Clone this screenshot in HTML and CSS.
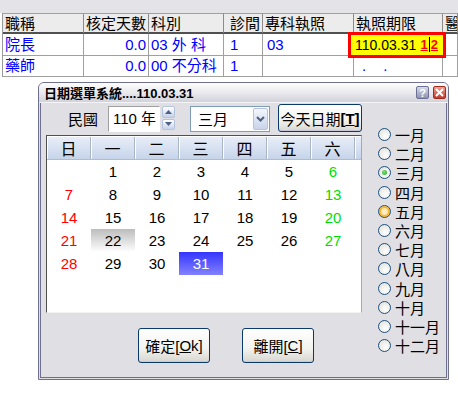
FILE: index.html
```html
<!DOCTYPE html>
<html lang="zh-Hant">
<head>
    <meta charset="UTF-8">
    <title>日期選單系統</title>
    <link rel="stylesheet" href="styles.css">
</head>
<body>
    <div class="sheet">
        <div class="sheet-top"></div>
        <div class="grid">
            <div class="cell head">職稱</div>
            <div class="cell head">核定天數</div>
            <div class="cell head">科別</div>
            <div class="cell head c4">診間</div>
            <div class="cell head">專科執照</div>
            <div class="cell head">執照期限</div>
            <div class="cell head">醫</div>

            <div class="cell">院長</div>
            <div class="cell num">0.0</div>
            <div class="cell">03 外 科</div>
            <div class="cell c4">1</div>
            <div class="cell c5">03</div>
            <div class="cell"></div>
            <div class="cell"></div>

            <div class="cell row2">藥師</div>
            <div class="cell num row2">0.0</div>
            <div class="cell row2">00 不分科</div>
            <div class="cell c4 row2">1</div>
            <div class="cell row2"></div>
            <div class="cell row2 dots"><span>.</span><span>.</span></div>
            <div class="cell row2"></div>
        </div>

        <!-- editor box over the 執照期限 cell -->
        <div class="cell-editor">
            <span>110.03.31</span>
            <span class="caret-text">1<i class="caret"></i>2</span>
        </div>
    </div>

    <div class="dialog">
        <div class="titlebar">
            <span class="title">日期選單系統....110.03.31</span>
            <span class="title-btns">
                <span class="tbtn help">?</span>
                <span class="tbtn close">
                    <svg width="9" height="9" viewBox="0 0 9 9"><path d="M1 1L8 8M8 1L1 8" stroke="#fff" stroke-width="2"/></svg>
                </span>
            </span>
        </div>

        <div class="dialog-body">
            <div class="left-col">
                <div class="toolbar">
                    <span class="era">民國</span>
                    <span class="year-box">110 年</span>
                    <span class="spinner">
                        <span class="spin"><svg width="7" height="4" viewBox="0 0 7 4"><path d="M0 4L3.5 0L7 4Z" fill="#4d6185"/></svg></span>
                        <span class="spin"><svg width="7" height="4" viewBox="0 0 7 4"><path d="M0 0L3.5 4L7 0Z" fill="#4d6185"/></svg></span>
                    </span>
                    <span class="month-select">
                        <span class="month-text">三月</span>
                        <span class="drop"><svg width="9" height="6" viewBox="0 0 9 6"><path d="M1 1L4.5 4.5L8 1" stroke="#4d6185" stroke-width="2" fill="none"/></svg></span>
                    </span>
                    <span class="btn today">今天日期<span class="key">[<u>T</u>]</span></span>
                </div>

                <div class="calendar">
                    <div class="cal-head">
                        <span>日</span><span>一</span><span>二</span><span>三</span><span>四</span><span>五</span><span>六</span><span class="sliver"></span>
                    </div>
                    <div class="cal-days" id="days"></div>
                </div>

                <div class="actions">
                    <span class="btn action">確定[<u>O</u>k]</span>
                    <span class="btn action">離開[<u>C</u>]</span>
                </div>
            </div>

            <ul class="months" id="months"></ul>
        </div>
    </div>

    <script>
        // March of 110 (2021) starts on a Monday
        const daysBox = document.getElementById('days');
        const firstWeekday = 1;
        for (let i = 0; i < firstWeekday; i++) {
            daysBox.appendChild(document.createElement('span'));
        }
        for (let d = 1; d <= 31; d++) {
            const cell = document.createElement('span');
            const weekday = (firstWeekday + d - 1) % 7;
            cell.textContent = d;
            if (weekday === 0) cell.className = 'sun';
            if (weekday === 6) cell.className = 'sat';
            if (d === 22) cell.className = 'today-day';
            if (d === 31) cell.className = 'picked';
            daysBox.appendChild(cell);
        }

        const monthNames = ['一月', '二月', '三月', '四月', '五月', '六月', '七月', '八月', '九月', '十月', '十一月', '十二月'];
        const monthsBox = document.getElementById('months');
        monthNames.forEach((name, i) => {
            const li = document.createElement('li');
            let cls = 'radio';
            if (i === 2) cls += ' checked';
            if (i === 4) cls += ' hover';
            li.innerHTML = `<span class="${cls}"></span>${name}`;
            monthsBox.appendChild(li);
        });
    </script>
</body>
</html>
```

FILE: styles.css
```css
* {
    margin: 0;
    padding: 0;
    box-sizing: border-box;
}

body {
    width: 458px;
    height: 396px;
    overflow: hidden;
    background: #ffffff;
    font-family: "Liberation Sans", "Noto Sans CJK TC", sans-serif;
    font-size: 15px;
    color: #000;
    position: relative;
}

/* ---- grid behind the dialog ---- */
.sheet {
    position: relative;
    padding-left: 2px;
}

.sheet-top {
    height: 13px;
    background: #e4e4e8;
    margin-left: -2px;
}

.grid {
    display: grid;
    grid-template-columns: 81px 65px 75px 39px 91px 89px 1fr;
    border-left: 1px solid #9a9a9a;
}

.cell {
    height: 22px;
    line-height: 21px;
    padding-left: 2px;
    border-right: 1px solid #a0a0a0;
    border-bottom: 1px solid #a0a0a0;
    color: #0000ff;
    white-space: nowrap;
    overflow: hidden;
}

.cell.head {
    height: 21px;
    line-height: 19px;
    color: #000;
    background: #ececec;
    border-top: 1px solid #a0a0a0;
    border-right-color: #8c8c8c;
    border-bottom: 2px solid #505050;
}

.cell.row2 {
    height: 21px;
    line-height: 20px;
}

.cell.num {
    text-align: right;
    padding-right: 2px;
}

.cell.c4 {
    padding-left: 6px;
}

.cell.c5 {
    padding-left: 4px;
}

.cell.dots span {
    margin-left: 6px;
    margin-right: 11px;
}

.cell-editor {
    position: absolute;
    left: 348px;
    top: 32px;
    width: 98px;
    height: 26px;
    border: 3px solid #ff0000;
    background: #ffff00;
    font-size: 14px;
    display: flex;
    align-items: center;
    justify-content: space-between;
    padding: 0 5px 1px 4px;
}

.caret-text {
    color: #ff0000;
    font-weight: bold;
    font-size: 13px;
    text-decoration: underline;
    display: flex;
    align-items: center;
}

.caret {
    display: inline-block;
    width: 1px;
    height: 15px;
    background: #000;
    margin: 0 1px;
}

/* ---- dialog window ---- */
.dialog {
    position: absolute;
    left: 38px;
    top: 82px;
    width: 411px;
    height: 298px;
    border: 1px solid #6f6f8f;
    border-radius: 6px 6px 0 0;
    background: #e0dfe3;
    box-shadow: inset 0 0 0 1px #e0dfe3, inset 0 0 0 2px #6f6f8f;
}

.titlebar {
    height: 20px;
    display: flex;
    align-items: center;
    justify-content: space-between;
    padding: 0 2px 0 5px;
    border-radius: 5px 5px 0 0;
    background: linear-gradient(#fdfdfd, #ececf0 45%, #d2d2da);
    border-bottom: 1px solid #f4f4f6;
}

.title {
    font-size: 13px;
    font-weight: bold;
}

.title-btns {
    display: flex;
    gap: 4px;
}

.tbtn {
    width: 13px;
    height: 13px;
    border-radius: 2px;
    display: flex;
    align-items: center;
    justify-content: center;
    font-size: 11px;
    font-weight: bold;
    color: #fff;
}

.tbtn.help {
    background: linear-gradient(#d8dae8, #8e93b2);
    border: 1px solid #6c7094;
}

.tbtn.close {
    background: linear-gradient(#f0a090, #c8382a);
    border: 1px solid #a02a20;
}

.dialog-body {
    display: flex;
    padding-left: 7px;
}

.left-col {
    width: 316px;
}

.toolbar {
    display: flex;
    align-items: center;
    height: 29px;
    margin-top: 1px;
}

.era {
    margin-left: 22px;
    width: 40px;
}

.year-box {
    width: 52px;
    height: 26px;
    line-height: 24px;
    padding-left: 4px;
    background: #fff;
    border: 1px solid;
    border-color: #a0a0a0 #ffffff #ffffff #a0a0a0;
}

.spinner {
    display: flex;
    flex-direction: column;
    margin-left: 2px;
    height: 25px;
}

.spin {
    width: 13px;
    height: 12px;
    margin-bottom: 1px;
    display: flex;
    align-items: center;
    justify-content: center;
    border: 1px solid #b4c4dc;
    border-radius: 2px;
    background: linear-gradient(#ffffff, #c6d3ec);
}

.month-select {
    width: 80px;
    height: 26px;
    margin-left: 15px;
    background: #fff;
    border: 1px solid #7f9db9;
    display: flex;
    align-items: center;
    justify-content: space-between;
    padding: 0 1px 0 7px;
}

.drop {
    width: 15px;
    height: 22px;
    display: flex;
    align-items: center;
    justify-content: center;
    border: 1px solid #b4c4dc;
    border-radius: 2px;
    background: linear-gradient(#f4f6fb, #c8d4ec);
}

.btn {
    display: inline-flex;
    align-items: center;
    justify-content: center;
    border: 1px solid #0a3a6a;
    border-radius: 3px;
    background: linear-gradient(#ffffff, #f2f2ef 60%, #d8d6d0);
    box-shadow: inset 0 -1px 0 #c8c8d8;
}

.btn.today {
    width: 84px;
    height: 28px;
    margin-left: 8px;
    align-self: flex-start;
}

.key {
    font-weight: bold;
}

/* ---- calendar ---- */
.calendar {
    width: 316px;
    height: 178px;
    margin-top: 2px;
    background: #fff;
    border: 1px solid;
    border-color: #505050 #a8a8a8 #f2f2ee #505050;
    padding-top: 1px;
}

.cal-head {
    display: flex;
    height: 23px;
    border-bottom: 1px solid #b0bcd0;
}

.cal-head span {
    width: 44px;
    display: flex;
    align-items: center;
    justify-content: center;
    font-size: 16px;
    background: linear-gradient(#e8eef8, #c6d4ea);
    border-right: 1px solid #a8b4c8;
    box-shadow: inset 1px 0 0 #ffffff;
}

.cal-head .sliver {
    width: 6px;
    border-right: none;
}

.cal-days {
    display: grid;
    grid-template-columns: repeat(7, 44px);
    grid-auto-rows: 23px;
}

.cal-days span {
    display: flex;
    align-items: center;
    justify-content: center;
    font-size: 15px;
}

.cal-days .sun {
    color: #ff0000;
}

.cal-days .sat {
    color: #00dd00;
}

.cal-days .today-day {
    background: linear-gradient(#bcbcbc, #ffffff);
}

.cal-days .picked {
    color: #fff;
    background: linear-gradient(#3434ff, #8282ff);
}

.actions {
    display: flex;
    gap: 32px;
    padding-left: 92px;
    margin-top: 15px;
}

.btn.action {
    width: 72px;
    height: 35px;
}

/* ---- month radios ---- */
.months {
    list-style: none;
    margin-left: 16px;
    margin-top: 22px;
}

.months li {
    height: 19.2px;
    display: flex;
    align-items: center;
    gap: 4px;
    font-size: 15px;
}

.radio {
    width: 13px;
    height: 13px;
    border-radius: 50%;
    border: 1px solid #1c5180;
    background: radial-gradient(circle at 60% 65%, #ffffff, #dcdcd6);
    display: flex;
    align-items: center;
    justify-content: center;
}

.radio.checked::after {
    content: "";
    width: 5px;
    height: 5px;
    border-radius: 50%;
    background: radial-gradient(circle at 40% 40%, #7ee27e, #21a121);
}

.radio.hover {
    box-shadow: inset 0 0 0 2px #f8b636;
    background: radial-gradient(circle, #fff3d4, #fbd27a);
}
```
